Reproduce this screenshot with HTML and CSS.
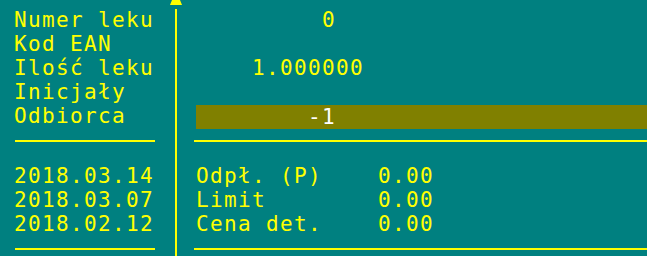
FILE: index.html
```html
<!DOCTYPE html>
<html lang="pl">
<head>
  <meta charset="UTF-8" />
  <title>Wydanie leku</title>
  <link rel="stylesheet" href="styles.css">
</head>
<body>
  <div class="screen">
    <div class="panel left">
      <div class="row">Numer leku</div>
      <div class="row">Kod EAN</div>
      <div class="row">Ilość leku</div>
      <div class="row">Inicjały</div>
      <div class="row">Odbiorca</div>
      <div class="rule"></div>
      <div class="row">2018.03.14</div>
      <div class="row">2018.03.07</div>
      <div class="row">2018.02.12</div>
      <div class="rule"></div>
      <div class="row">-1</div>
    </div>

    <div class="scroll">
      <svg class="arrow" width="12" height="5" viewBox="0 0 12 5">
        <polygon points="2,0 10,0 12,5 0,5" fill="#ffff00"/>
      </svg>
      <div class="track"></div>
    </div>

    <div class="panel right">
      <div class="row">         0</div>
      <div class="row"></div>
      <div class="row">    1.000000</div>
      <div class="row"></div>
      <div class="row field">        -1</div>
      <div class="rule"></div>
      <div class="row">Odpł. (P)    0.00</div>
      <div class="row">Limit        0.00</div>
      <div class="row">Cena det.    0.00</div>
      <div class="rule"></div>
    </div>
  </div>
</body>
</html>
```

FILE: styles.css
```css
body {
  margin: 0;
  background: #008080;
  color: #ffff00;
  font-family: "DejaVu Sans Mono", monospace;
  font-size: 21px;
  letter-spacing: 1.36px;
  overflow: hidden;
}
.screen {
  display: flex;
  height: 256px;
}
.panel {
  padding-top: 8px;
  box-sizing: border-box;
}
.left {
  width: 170px;
  padding-left: 14px;
}
.right {
  flex: 1;
  padding-left: 14px;
}
.row {
  height: 24px;
  line-height: 24px;
  white-space: pre;
}
.field {
  background: #808000;
  color: #fff;
  margin-top: 1px;
  margin-bottom: -1px;
}
.rule {
  height: 24px;
}
.rule::before {
  content: "";
  display: block;
  height: 2px;
  margin-top: 12px;
  background: #ffff00;
}
.left .rule {
  margin-left: 1px;
  width: 140px;
}
.right .rule {
  margin-left: -2px;
}
.scroll {
  width: 12px;
  display: flex;
  flex-direction: column;
  align-items: center;
}
.arrow {
  display: block;
  flex: none;
}
.track {
  flex: 1;
  width: 2px;
  margin-top: 4px;
  background: #ffff00;
}
```
